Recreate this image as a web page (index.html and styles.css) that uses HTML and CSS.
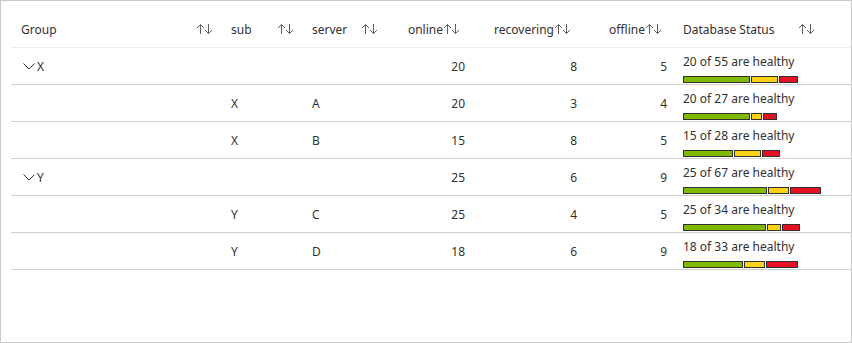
FILE: index.html
```html
<!DOCTYPE html>
<html lang="en">
<head>
  <meta charset="UTF-8">
  <title>Database Status</title>
  <link rel="stylesheet" href="styles.css">
</head>
<body>
  <div class="frame">
    <div class="grid">
      <div class="row head">
        <div class="cell sortable"><span>Group</span><svg class="sort" viewBox="0 0 17 12"><path d="M4.5 11V1.5M1 5l3.5-3.5L8 5M12.5 1v9.5M9 7l3.5 3.5L16 7"/></svg></div>
        <div class="cell sortable"><span>sub</span><svg class="sort" viewBox="0 0 17 12"><path d="M4.5 11V1.5M1 5l3.5-3.5L8 5M12.5 1v9.5M9 7l3.5 3.5L16 7"/></svg></div>
        <div class="cell sortable"><span>server</span><svg class="sort" viewBox="0 0 17 12"><path d="M4.5 11V1.5M1 5l3.5-3.5L8 5M12.5 1v9.5M9 7l3.5 3.5L16 7"/></svg></div>
        <div class="cell num h-online"><span>online</span><svg class="sort" viewBox="0 0 17 12"><path d="M4.5 11V1.5M1 5l3.5-3.5L8 5M12.5 1v9.5M9 7l3.5 3.5L16 7"/></svg></div>
        <div class="cell num h-recovering"><span>recovering</span><svg class="sort" viewBox="0 0 17 12"><path d="M4.5 11V1.5M1 5l3.5-3.5L8 5M12.5 1v9.5M9 7l3.5 3.5L16 7"/></svg></div>
        <div class="cell num h-offline"><span>offline</span><svg class="sort" viewBox="0 0 17 12"><path d="M4.5 11V1.5M1 5l3.5-3.5L8 5M12.5 1v9.5M9 7l3.5 3.5L16 7"/></svg></div>
        <div class="cell status-head"><span>Database Status</span><svg class="sort" viewBox="0 0 17 12"><path d="M4.5 11V1.5M1 5l3.5-3.5L8 5M12.5 1v9.5M9 7l3.5 3.5L16 7"/></svg></div>
      </div>

      <div class="row">
        <div class="cell group"><svg class="chevron" viewBox="0 0 12 7"><path d="M0.5 0.5L6 6l5.5-5.5"/></svg>X</div>
        <div class="cell"></div>
        <div class="cell"></div>
        <div class="cell num">20</div>
        <div class="cell num">8</div>
        <div class="cell num">5</div>
        <div class="cell status">
          <div class="label">20 of 55 are healthy</div>
          <div class="bar"><span class="ok" style="width: 67px"></span><span class="warn" style="width: 27px"></span><span class="bad" style="width: 19px"></span></div>
        </div>
      </div>

      <div class="row">
        <div class="cell"></div>
        <div class="cell">X</div>
        <div class="cell">A</div>
        <div class="cell num">20</div>
        <div class="cell num">3</div>
        <div class="cell num">4</div>
        <div class="cell status">
          <div class="label">20 of 27 are healthy</div>
          <div class="bar"><span class="ok" style="width: 67px"></span><span class="warn" style="width: 11px"></span><span class="bad" style="width: 14px"></span></div>
        </div>
      </div>

      <div class="row">
        <div class="cell"></div>
        <div class="cell">X</div>
        <div class="cell">B</div>
        <div class="cell num">15</div>
        <div class="cell num">8</div>
        <div class="cell num">5</div>
        <div class="cell status">
          <div class="label">15 of 28 are healthy</div>
          <div class="bar"><span class="ok" style="width: 50px"></span><span class="warn" style="width: 27px"></span><span class="bad" style="width: 18px"></span></div>
        </div>
      </div>

      <div class="row">
        <div class="cell group"><svg class="chevron" viewBox="0 0 12 7"><path d="M0.5 0.5L6 6l5.5-5.5"/></svg>Y</div>
        <div class="cell"></div>
        <div class="cell"></div>
        <div class="cell num">25</div>
        <div class="cell num">6</div>
        <div class="cell num">9</div>
        <div class="cell status">
          <div class="label">25 of 67 are healthy</div>
          <div class="bar"><span class="ok" style="width: 84px"></span><span class="warn" style="width: 21px"></span><span class="bad" style="width: 31px"></span></div>
        </div>
      </div>

      <div class="row">
        <div class="cell"></div>
        <div class="cell">Y</div>
        <div class="cell">C</div>
        <div class="cell num">25</div>
        <div class="cell num">4</div>
        <div class="cell num">5</div>
        <div class="cell status">
          <div class="label">25 of 34 are healthy</div>
          <div class="bar"><span class="ok" style="width: 83px"></span><span class="warn" style="width: 14px"></span><span class="bad" style="width: 18px"></span></div>
        </div>
      </div>

      <div class="row">
        <div class="cell"></div>
        <div class="cell">Y</div>
        <div class="cell">D</div>
        <div class="cell num">18</div>
        <div class="cell num">6</div>
        <div class="cell num">9</div>
        <div class="cell status">
          <div class="label">18 of 33 are healthy</div>
          <div class="bar"><span class="ok" style="width: 60px"></span><span class="warn" style="width: 21px"></span><span class="bad" style="width: 32px"></span></div>
        </div>
      </div>
    </div>
  </div>
</body>
</html>
```

FILE: styles.css
```css
html, body {
  margin: 0;
  padding: 0;
  background: #fff;
}
body {
  font-family: "Noto Sans", "Open Sans", Arial, sans-serif;
  font-size: 12px;
  color: #323130;
}
.frame {
  box-sizing: border-box;
  width: 852px;
  height: 343px;
  border: 1px solid #c8c8c8;
  padding: 10px 0 0 10px;
}
.row {
  display: grid;
  grid-template-columns: 210px 81px 84px 89px 112px 90px 1fr;
  height: 36px;
  border-bottom: 1px solid #d0d0d0;
}
.row.head {
  border-bottom-color: #ececec;
}
.cell {
  display: flex;
  align-items: center;
  padding: 0 10px;
  white-space: nowrap;
}
.head .cell {
  padding-right: 8px;
}
.sortable {
  justify-content: space-between;
}
.num {
  justify-content: flex-end;
}
.head .h-online { padding-right: 15px; }
.head .h-recovering { padding-right: 16px; }
.head .h-offline { padding-right: 15px; }
.sort {
  width: 17px;
  height: 12px;
  fill: none;
  stroke: #605e5c;
  stroke-width: 1;
}
.status-head {
  padding-left: 6px;
}
.status-head .sort {
  margin-left: 24px;
}
.group {
  padding-left: 12px;
}
.chevron {
  width: 12px;
  height: 7px;
  margin-right: 2px;
  fill: none;
  stroke: #323130;
  stroke-width: 1;
}
.status {
  flex-direction: column;
  align-items: flex-start;
  justify-content: flex-start;
  padding: 6px 0 0 6px;
}
.label {
  line-height: 16px;
}
.bar {
  display: flex;
  gap: 1px;
  margin-top: 6px;
}
.bar span {
  height: 7px;
  box-sizing: border-box;
  border: 1px solid;
}
.ok {
  background: #7fba00;
  border-color: #74a900;
}
.warn {
  background: #fcd116;
  border-color: #e6b800;
}
.bad {
  background: #e81123;
  border-color: #d00f1f;
}
```
